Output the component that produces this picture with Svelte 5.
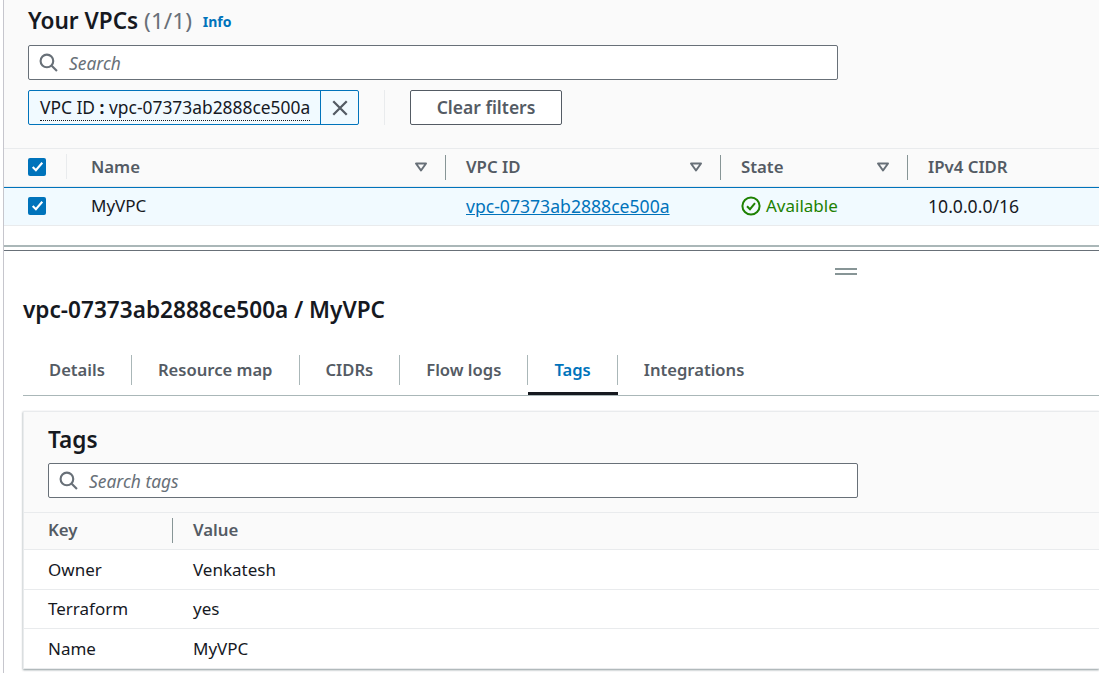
<script>
  const columns = [
    { label: "Name", width: 379, first: true },
    { label: "VPC ID", width: 275 },
    { label: "State", width: 187 },
    { label: "IPv4 CIDR", width: 187, last: true }
  ];
  const tabs = ["Details", "Resource map", "CIDRs", "Flow logs", "Tags", "Integrations"];
  const tags = [
    { key: "Owner", value: "Venkatesh" },
    { key: "Terraform", value: "yes" },
    { key: "Name", value: "MyVPC" }
  ];
</script>

{#snippet searchIcon()}
  <svg class="search-icon" viewBox="0 0 18 18" width="19" height="19" aria-hidden="true">
    <circle cx="7.5" cy="7.5" r="6" fill="none" stroke="#687078" stroke-width="2" />
    <path d="M12 12l5 5" fill="none" stroke="#687078" stroke-width="2" />
  </svg>
{/snippet}

{#snippet checkbox()}
  <span class="checkbox">
    <svg viewBox="0 0 16 16" width="17" height="17" aria-hidden="true">
      <path d="M3.5 8.5l3 3 6-7" fill="none" stroke="#fff" stroke-width="2" />
    </svg>
  </span>
{/snippet}

<div class="page">
  <section class="top">
    <h1>Your VPCs <span class="count">(1/1)</span> <a class="info">Info</a></h1>
    <div class="search main-search">
      {@render searchIcon()}
      <span>Search</span>
    </div>
    <div class="filters">
      <div class="token">
        <span class="token-label"><span class="underlined">VPC ID <b>:</b> vpc-07373ab2888ce500a</span></span>
        <span class="token-close">
          <svg viewBox="0 0 16 16" width="18" height="18" aria-hidden="true">
            <path d="M2 2l12 12M14 2L2 14" fill="none" stroke="#545b64" stroke-width="2" />
          </svg>
        </span>
      </div>
      <span class="filter-sep"></span>
      <button>Clear filters</button>
    </div>

    <div class="head-row">
      <div class="check-cell">{@render checkbox()}<i class="light-sep"></i></div>
      {#each columns as col}
        <div class="head-cell" class:first={col.first} style="width: {col.width}px">
          <span>{col.label}</span>
          {#if !col.last}
            <svg class="caret" viewBox="0 0 14 10" width="14" height="10" aria-hidden="true">
              <path d="M2 1.5h10L7 8.5z" fill="none" stroke="#687078" stroke-width="2" stroke-linejoin="round" />
            </svg>
            <i class="sep"></i>
          {/if}
        </div>
      {/each}
    </div>
    <div class="row">
      <div class="check-cell">{@render checkbox()}</div>
      <div class="cell first" style="width: 379px">MyVPC</div>
      <div class="cell link-cell" style="width: 275px"><a class="link">vpc-07373ab2888ce500a</a></div>
      <div class="cell state" style="width: 187px">
        <svg viewBox="0 0 20 20" width="20" height="20" aria-hidden="true">
          <circle cx="10" cy="10" r="8.6" fill="none" stroke="#1d8102" stroke-width="2" />
          <path d="M6 10.2l3 3 5-6" fill="none" stroke="#1d8102" stroke-width="2" />
        </svg>
        Available
      </div>
      <div class="cell link-cell">10.0.0.0/16</div>
    </div>
  </section>

  <div class="splitter">
    <span class="handle"></span>
  </div>

  <section class="details">
    <h2>vpc-07373ab2888ce500a / MyVPC</h2>
    <div class="tabs">
      {#each tabs as tab, i}
        <div class="tab" class:active={tab === "Tags"} class:no-sep={i === tabs.length - 1}>{tab}</div>
      {/each}
    </div>
    <div class="card">
      <div class="card-head">
        <h3>Tags</h3>
        <div class="search tag-search">
          {@render searchIcon()}
          <span>Search tags</span>
        </div>
      </div>
      <div class="tag-head">
        <div class="key">Key<i class="sep"></i></div>
        <div>Value</div>
      </div>
      {#each tags as tag}
        <div class="tag-row">
          <div class="key">{tag.key}</div>
          <div>{tag.value}</div>
        </div>
      {/each}
    </div>
  </section>
</div>

<style>
  :global(body) {
    background: #fff;
    overflow: hidden;
  }

  .page {
    height: 673px;
    overflow: hidden;
    margin-left: 3px;
    border-left: 1px solid #c6c6cd;
    font-family: "Noto Sans", "Open Sans", sans-serif;
    font-size: 17px;
    color: #16191f;
    background: #fff;
  }

  a {
    color: #0073bb;
  }

  h1 {
    margin: 0;
    padding-left: 24px;
    height: 45px;
    font-size: 22.6px;
    line-height: 42px;
    font-weight: 600;
  }

  .count {
    font-weight: 400;
    color: #687078;
  }

  .info {
    margin-left: 5px;
    font-size: 14px;
    font-weight: 700;
    vertical-align: 2px;
  }

  .top {
    background: #fafafa;
    height: 226px;
    box-sizing: border-box;
    border-bottom: 1px solid #e9ebed;
  }

  .search {
    display: flex;
    align-items: center;
    gap: 11px;
    box-sizing: border-box;
    background: #fff;
    border: 1px solid #687078;
    border-radius: 2px;
    padding-left: 10px;
    font-size: 17.4px;
    font-style: italic;
    color: #687078;
  }

  .main-search {
    margin-left: 24px;
    width: 810px;
    height: 35px;
  }

  .tag-search {
    margin-left: 24px;
    width: 810px;
    height: 35px;
  }

  .filters {
    display: flex;
    align-items: stretch;
    margin: 10px 0 0 24px;
    height: 35px;
  }

  .token {
    display: flex;
    box-sizing: border-box;
    width: 331px;
    border: 1px solid #0073bb;
    border-radius: 2px;
    background: #f1faff;
  }

  .token-label {
    flex: 1;
    padding-left: 11px;
    font-size: 17.4px;
    line-height: 32px;
    white-space: nowrap;
    overflow: hidden;
  }

  .underlined {
    border-bottom: 1px dotted #16191f;
    padding-bottom: 1px;
  }

  .token-close {
    display: flex;
    align-items: center;
    justify-content: center;
    width: 37px;
    flex: none;
    border-left: 1px solid #0073bb;
  }

  .filter-sep {
    width: 1px;
    margin-left: 25px;
    background: #e9ebed;
  }

  button {
    margin-left: 25px;
    width: 152px;
    padding: 0 0 2px;
    background: #fff;
    border: 1px solid #545b64;
    border-radius: 2px;
    font: 600 17.5px "Noto Sans", "Open Sans", sans-serif;
    color: #545b64;
  }

  .head-row {
    display: flex;
    align-items: center;
    margin-top: 23px;
    height: 39px;
    padding-bottom: 2px;
    border-top: 1px solid #e9ebed;
    border-bottom: 1px solid #e9ebed;
    box-sizing: border-box;
  }

  .check-cell {
    position: relative;
    display: flex;
    align-items: center;
    width: 63px;
    padding-left: 24px;
    box-sizing: border-box;
    flex: none;
  }

  .checkbox {
    display: flex;
    width: 18px;
    height: 18px;
    border-radius: 2px;
    background: #0073bb;
    align-items: center;
    justify-content: center;
  }

  .light-sep {
    position: absolute;
    right: 0;
    top: -4px;
    height: 25px;
    border-left: 1px solid #e9ebed;
  }

  .head-cell {
    position: relative;
    display: flex;
    align-items: center;
    justify-content: space-between;
    box-sizing: border-box;
    padding: 0 18px 0 20px;
    font-size: 16.8px;
    font-weight: 600;
    color: #545b64;
    flex: none;
  }

  .head-cell.first {
    padding-left: 24px;
  }

  .caret {
    flex: none;
  }

  .sep {
    position: absolute;
    right: 0;
    top: 0;
    height: 25px;
    border-left: 1px solid #879596;
  }

  .row {
    display: flex;
    align-items: center;
    height: 38px;
    padding-bottom: 2px;
    box-sizing: border-box;
    margin-left: -1px;
    background: #f1faff;
    border-top: 1px solid #0073bb;
    border-left: 1px solid #0073bb;
  }

  .cell {
    padding-left: 20px;
    box-sizing: border-box;
    flex: none;
  }

  .cell.first {
    padding-left: 24px;
  }

  .link-cell {
    font-size: 17.6px;
  }

  .link {
    text-decoration: underline;
  }

  .state {
    display: flex;
    align-items: center;
    gap: 5px;
    color: #1d8102;
  }

  .splitter {
    position: relative;
    height: 25px;
    padding-top: 19px;
  }

  .splitter::before {
    content: "";
    display: block;
    height: 6px;
    border-top: 2px solid #aab7b8;
    border-bottom: 1px solid #687078;
    box-sizing: border-box;
    margin-left: -1px;
  }

  .handle {
    position: absolute;
    left: 831px;
    top: 42px;
    width: 22px;
    height: 7px;
    border-top: 2px solid #879596;
    border-bottom: 2px solid #879596;
    box-sizing: border-box;
  }

  .details {
    padding: 0 0 0 19px;
  }

  h2 {
    margin: 0;
    height: 85px;
    font-size: 22.6px;
    line-height: 79px;
    font-weight: 600;
  }

  .tabs {
    display: flex;
    height: 41px;
    box-sizing: border-box;
    border-bottom: 1px solid #aab7b8;
  }

  .tab {
    position: relative;
    padding: 0 26px;
    font-size: 16.6px;
    line-height: 29px;
    height: 30px;
    font-weight: 600;
    color: #545b64;
    border-right: 1px solid #aab7b8;
  }

  .tab.no-sep {
    border-right: none;
  }

  .tab.active {
    color: #0073bb;
  }

  .tab.active::after {
    content: "";
    position: absolute;
    left: 0;
    right: -1px;
    top: 37px;
    height: 3px;
    background: #16191f;
  }

  .card {
    margin-top: 15px;
    height: 258px;
    box-sizing: border-box;
    background: #fff;
    border: 1px solid #e9ebed;
    border-right: none;
    box-shadow: 0 1px 2px rgba(0, 28, 36, 0.45);
  }

  .card-head {
    background: #fafafa;
    padding-bottom: 14px;
  }

  h3 {
    margin: 0;
    padding-left: 24px;
    height: 51px;
    font-size: 22.6px;
    line-height: 55px;
    font-weight: 600;
  }

  .tag-head {
    display: flex;
    align-items: center;
    height: 38px;
    padding-bottom: 3px;
    box-sizing: border-box;
    background: #fafafa;
    border-top: 1px solid #e9ebed;
    border-bottom: 1px solid #e9ebed;
    padding-left: 24px;
    font-size: 16.8px;
    font-weight: 600;
    color: #545b64;
  }

  .key {
    position: relative;
    width: 145px;
    flex: none;
  }

  .tag-head .sep {
    right: 20px;
    top: 0;
  }

  .tag-row {
    display: flex;
    align-items: center;
    height: 39.5px;
    box-sizing: border-box;
    padding-left: 24px;
    border-bottom: 1px solid #e9ebed;
  }

  .tag-row:last-child {
    border-bottom: none;
  }
</style>
